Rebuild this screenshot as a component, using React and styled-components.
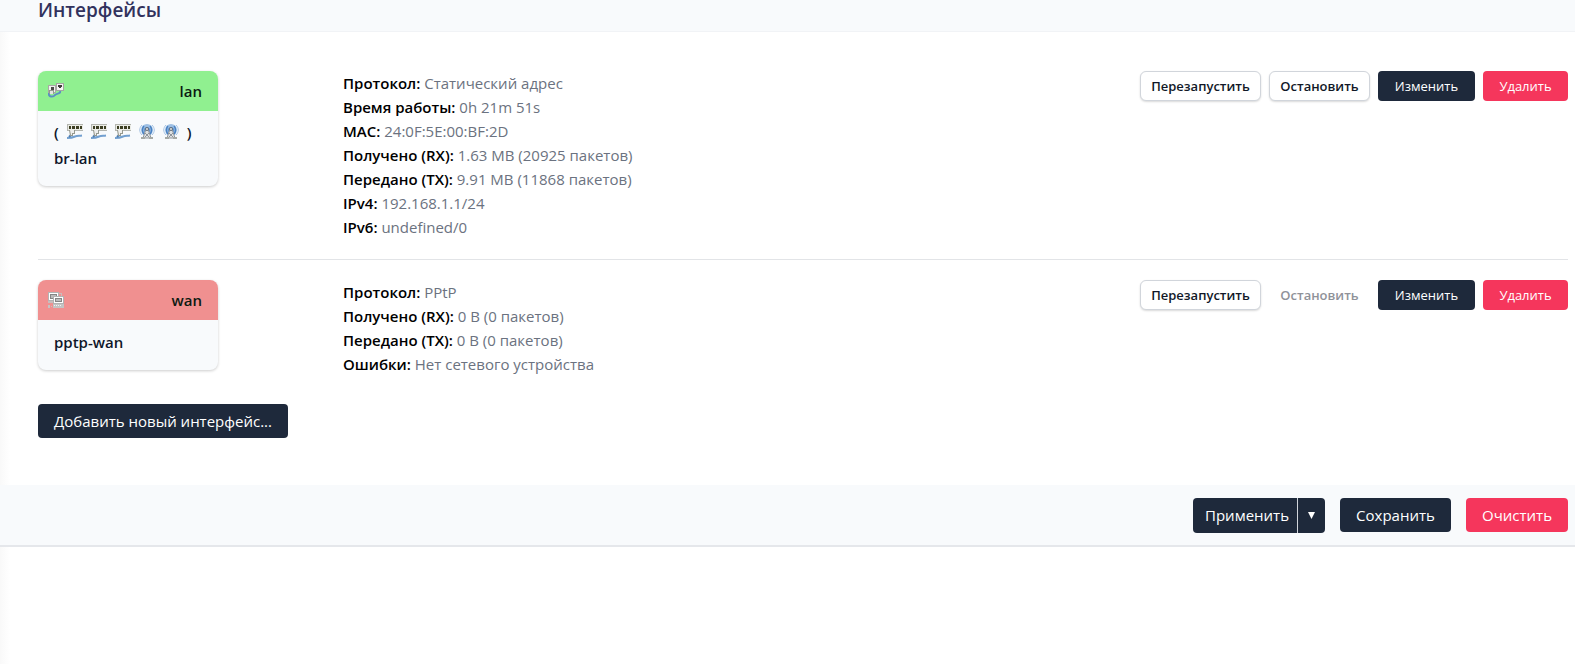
import React from 'react';
import styled, { createGlobalStyle } from 'styled-components'

const interfaces = [
  {
    name: 'lan',
    color: '#90f090',
    icon: 'bridge',
    device: 'br-lan',
    ports: ['switch', 'switch', 'switch', 'wifi', 'wifi'],
    canStop: true,
    details: [
      ['Протокол', 'Статический адрес'],
      ['Время работы', '0h 21m 51s'],
      ['MAC', '24:0F:5E:00:BF:2D'],
      ['Получено (RX)', '1.63 MB (20925 пакетов)'],
      ['Передано (TX)', '9.91 MB (11868 пакетов)'],
      ['IPv4', '192.168.1.1/24'],
      ['IPv6', 'undefined/0'],
    ],
  },
  {
    name: 'wan',
    color: '#f09090',
    icon: 'tunnel',
    device: 'pptp-wan',
    ports: [],
    canStop: false,
    details: [
      ['Протокол', 'PPtP'],
      ['Получено (RX)', '0 B (0 пакетов)'],
      ['Передано (TX)', '0 B (0 пакетов)'],
      ['Ошибки', 'Нет сетевого устройства'],
    ],
  },
]

const drawings = {
  bridge: (
    <>
      <path d="M1 10C0 14 5 14.500 7 12C9 10 13 11 12 8" fill="none" stroke="#5c8fc4" strokeWidth="2" />
      <path d="M0 2h8v8H0z" fill="#a8aaa4" />
      <path d="M1 3h6v6H1z" fill="#f2f2f0" />
      <path d="M3 4h3v3H3z" fill="#4a4c46" />
      <path d="M8 0h8v8H8z" fill="#a4a6a0" />
      <path d="M9 1h6v6H9z" fill="#f4f4f2" />
      <path d="M10 2h4v2h-1v1h-2V4h-1z" fill="#3c3e38" />
      <path d="M1 7h5v4H1z" fill="#96998f" />
      <path d="M2 8h3v3H2z" fill="#e4e5e2" />
    </>
  ),
  switch: (
    <>
      <path d="M0 0h16v7H0z" fill="#b4b6b0" />
      <path d="M1 1h15v5H1z" fill="#ebece6" />
      <path d="M2 2h2v3H2zM5 2h3v3H5zM9 2h3v3H9zM13 2h2v3h-2z" fill="#3c3e22" />
      <path d="M0 14C3 14 5 14 8 12.500C10 12 11 12 15 11.500" fill="none" stroke="#729fcf" strokeWidth="2" />
      <path d="M2 13l3-3" stroke="#4d7db2" strokeWidth="2" />
      <path d="M2 6h6v4H6v2H3z" fill="#96998f" />
      <path d="M3 6h4v3H5v2H4z" fill="#eeeeec" />
    </>
  ),
  wifi: (
    <>
      <path d="M3 1C0 4 0 8 3 11M13 1C16 4 16 8 13 11" fill="none" stroke="#a5c2e3" strokeWidth="1" />
      <circle cx="8" cy="6" r="6" fill="#9dbfe4" />
      <path d="M5 2C3 4 3 8 5 10M11 2C13 4 13 8 11 10" fill="none" stroke="#4a82c3" strokeWidth="1.500" />
      <circle cx="8" cy="6" r="3" fill="#5e93cf" />
      <path d="M7 5h2l3 9H4z" fill="#dfe1e2" stroke="#8f959c" strokeWidth="1" />
      <path d="M6 9l4 4M10 9l-4 4" stroke="#8f959c" strokeWidth="1" />
      <circle cx="8" cy="5" r="1.500" fill="#eeeeec" stroke="#5f6b78" strokeWidth="1" />
      <path d="M2 13h4v2H2zM10 13h4v2h-4z" fill="#a6a9a5" />
    </>
  ),
  tunnel: (
    <>
      <path d="M0 0h11v9H0z" fill="#b4b4b4" />
      <path d="M1 1h9v7H1z" fill="#fff" />
      <path d="M2 2h7v5H2z" fill="#858585" />
      <path d="M3 3h5v3H3z" fill="#bcbcbc" />
      <path d="M11 1h3v3h-1V2h-2zM0 9h5v2H0z" fill="#c9bcbc" />
      <path d="M5 4h11v8H5z" fill="#b2b2b2" />
      <path d="M6 5h9v6H6z" fill="#fff" />
      <path d="M7 6h7v4H7z" fill="#858585" />
      <path d="M8 7h5v2H8z" fill="#bcbcbc" />
      <path d="M5 12h11v4H5zM0 13h2v3H0zM3 14h1v1H3z" fill="#c4c4c4" />
      <path d="M6 13h1v1H6zM8 13h1v1H8zM10 13h1v1h-1zM12 13h1v1h-1z" fill="#f2f2f2" />
    </>
  ),
}

const Icon = ({ name }) => (
  <StyledIcon viewBox="0 0 16 16" aria-hidden="true">{drawings[name]}</StyledIcon>
)

const InterfaceRow = ({ item }) => (
  <Row>
    <BadgeColumn>
      <Card>
        <CardHead $color={item.color}>
          <Icon name={item.icon} />
          {item.name}
        </CardHead>
        <CardBody>
          {item.ports.length > 0 && (
            <Ports>
              (
              {item.ports.map((port, i) => <Icon key={i} name={port} />)}
              )
            </Ports>
          )}
          <div>{item.device}</div>
        </CardBody>
      </Card>
    </BadgeColumn>
    <Details>
      {item.details.map(([label, value]) => (
        <div key={label}><Label>{label}:</Label> {value}</div>
      ))}
    </Details>
    <Actions>
      <OutlineButton $width={121}>Перезапустить</OutlineButton>
      <OutlineButton $width={101} disabled={!item.canStop}>Остановить</OutlineButton>
      <SmallButton $width={97}>Изменить</SmallButton>
      <SmallButton $width={85} $danger>Удалить</SmallButton>
    </Actions>
  </Row>
)

const App = () => {
  return (
    <Page>
      <GlobalStyle />
      <Header>
        <Title>Интерфейсы</Title>
      </Header>
      <Section>
        {interfaces.map(item => <InterfaceRow key={item.name} item={item} />)}
        <Button $width={250}>Добавить новый интерфейс...</Button>
      </Section>
      <Footer>
        <Split>
          <SplitMain>Применить</SplitMain>
          <SplitToggle aria-label="Другие варианты">
            <Caret viewBox="0 0 8 8" aria-hidden="true"><path d="M0 0h8L4 8z" /></Caret>
          </SplitToggle>
        </Split>
        <Button $width={111}>Сохранить</Button>
        <Button $width={102} $danger>Очистить</Button>
      </Footer>
    </Page>
  );
}

const GlobalStyle = createGlobalStyle`
*{
  box-sizing: border-box;
}
body{
  margin: 0;
  background-color: #fff;
  font-family: "Open Sans", "Noto Sans", sans-serif;
  font-size: 15px;
  line-height: 24px;
  color: #0f172a;
}
button{
  border: 0;
  padding: 0;
  font-family: inherit;
  cursor: pointer;
}
`
const Page = styled.main`
min-height: 100vh;
background-image: linear-gradient(to right, #f9f9f9, #fff 10px);
`
const Header = styled.header`
height: 32px;
padding: 0 38px;
background-color: #f8fafc;
border-bottom: solid 1px #f1f3f6;
`
const Title = styled.h3`
margin: 0;
font-size: 19px;
line-height: 20px;
font-weight: 600;
color: #32325d;
`
const Section = styled.section`
padding: 39px 7px 47px 38px;
`
const Row = styled.div`
display: flex;
align-items: flex-start;
padding-bottom: 20px;
& + &{
  border-top: solid 1px #e2e4e7;
  padding: 20px 0 28px;
}
`
const BadgeColumn = styled.div`
flex: 0 0 305px;
`
const Card = styled.div`
width: 180px;
border-radius: 8px;
overflow: hidden;
background-color: #f8fafc;
box-shadow: 0 1px 3px rgba(0, 0, 0, .2);
font-weight: 600;
`
const CardHead = styled.div`
display: flex;
align-items: center;
justify-content: space-between;
height: 40px;
padding: 0 16px 0 10px;
background-color: ${props => props.$color};
color: #0c1a12;
`
const CardBody = styled.div`
padding: 10px 16px 16px;
`
const Ports = styled.div`
display: flex;
align-items: center;
gap: 8px;
height: 25px;
padding-bottom: 3px;
`
const StyledIcon = styled.svg`
width: 16px;
height: 16px;
flex: none;
`
const Details = styled.div`
flex: 1 1 0;
color: #6b7280;
`
const Label = styled.strong`
font-weight: 600;
color: #000;
`
const Actions = styled.div`
display: flex;
gap: 8px;
`
const SmallButton = styled.button`
min-width: ${props => props.$width}px;
height: 30px;
border-radius: 4px;
background-color: ${props => props.$danger ? '#f5365c' : '#1e293b'};
color: #fff;
font-size: 13px;
font-weight: 500;
`
const OutlineButton = styled(SmallButton)`
background-color: #fff;
border: solid 1px #d1d5db;
border-radius: 6px;
box-shadow: 0 1px 2px rgba(0, 0, 0, .15);
color: #111827;
font-weight: 600;
&:disabled{
  border-color: transparent;
  box-shadow: none;
  color: #8f9299;
  cursor: default;
}
`
const Button = styled.button`
min-width: ${props => props.$width}px;
height: 34px;
border-radius: 4px;
background-color: ${props => props.$danger ? '#f5365c' : '#1e293b'};
color: #fff;
font-size: 15px;
`
const Footer = styled.footer`
display: flex;
align-items: center;
justify-content: flex-end;
gap: 15px;
height: 62px;
padding: 0 7px;
background-color: #f8fafc;
border-bottom: solid 2px #e5e7eb;
`
const Split = styled.div`
display: flex;
height: 35px;
border-radius: 4px;
background-color: #1e293b;
`
const SplitMain = styled.button`
width: 104px;
padding-left: 4px;
background-color: transparent;
color: #fff;
font-size: 15px;
`
const SplitToggle = styled.button`
width: 28px;
border-left: solid 1px #d1d5db;
background-color: transparent;
`
const Caret = styled.svg`
display: block;
width: 7px;
height: 7px;
margin: 0 auto;
fill: #fff;
`

export default App;
